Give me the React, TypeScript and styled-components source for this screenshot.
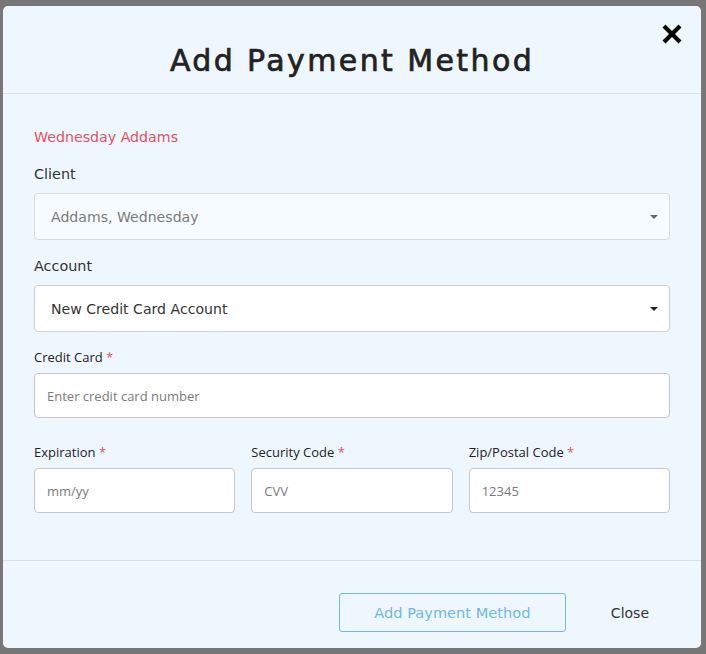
import React from "react";
import styled, { createGlobalStyle } from "styled-components";

const Global = createGlobalStyle`
  html, body { margin: 0; padding: 0; background: #777777; }
  * { box-sizing: border-box; }
`;

const Backdrop = styled.div`
  width: 706px;
  height: 654px;
  background: #777777;
  padding: 6px 5px 6px 3px;
`;

const Modal = styled.div`
  width: 698px;
  height: 642px;
  background: #eff7fe;
  border-radius: 5px;
  display: flex;
  flex-direction: column;
`;

const Header = styled.div`
  position: relative;
  height: 88px;
  border-bottom: 1px solid #dcdfe3;
  display: flex;
  align-items: center;
  justify-content: center;
  padding-top: 22px;
`;

const Title = styled.h1`
  margin: 0;
  font-family: "DejaVu Sans", sans-serif;
  font-weight: 400;
  font-size: 30px;
  letter-spacing: 2.4px;
  -webkit-text-stroke: 0.7px #222222;
  color: #222222;
`;

const CloseX = styled.button`
  position: absolute;
  right: 19px;
  top: 18px;
  width: 20px;
  height: 20px;
  border: none;
  background: transparent;
  padding: 0;
  cursor: pointer;
`;

const Body = styled.div`
  flex: 1;
  padding: 33px 31px 0 31px;
  display: flex;
  flex-direction: column;
`;

const ClientName = styled.div`
  font-family: "DejaVu Sans", sans-serif;
  font-size: 14.2px;
  color: #e4505e;
  line-height: 20px;
  margin-bottom: 17px;
`;

const BigLabel = styled.div`
  font-family: "DejaVu Sans", sans-serif;
  font-size: 14.4px;
  color: #333333;
  line-height: 20px;
  margin-bottom: 9px;
`;

const SelectBox = styled.div<{ $disabled?: boolean; $gap: number }>`
  height: 47px;
  border: 1px solid ${(p) => (p.$disabled ? "#d8dbdf" : "#ccd0d4")};
  border-radius: 4px;
  background: ${(p) => (p.$disabled ? "#f6fbff" : "#ffffff")};
  display: flex;
  align-items: center;
  justify-content: space-between;
  padding: 0 11px 0 16px;
  font-family: "DejaVu Sans", sans-serif;
  font-size: 14.1px;
  color: ${(p) => (p.$disabled ? "#7a7a7a" : "#333333")};
  margin-bottom: ${(p) => p.$gap}px;
`;

const Caret = styled.span<{ $muted?: boolean }>`
  width: 0;
  height: 0;
  border-left: 4px solid transparent;
  border-right: 4px solid transparent;
  border-top: 4px solid ${(p) => (p.$muted ? "#666" : "#222")};
`;

const FieldLabel = styled.div`
  font-family: "Open Sans", sans-serif;
  font-size: 13px;
  color: #222222;
  line-height: 18px;
  margin-bottom: 7px;
`;

const Star = styled.span`
  color: #e4505e;
`;

const Input = styled.input`
  width: 100%;
  height: 45px;
  border: 1px solid #c4c8cd;
  border-radius: 4px;
  background: #ffffff;
  padding: 0 12px;
  font-family: "Open Sans", sans-serif;
  font-size: 13px;
  color: #333;
  outline: none;
  &::placeholder { color: #7a7a7a; }
`;

const Field = styled.div`
  display: flex;
  flex-direction: column;
`;

const Row = styled.div`
  display: grid;
  grid-template-columns: 1fr 1fr 1fr;
  gap: 16px;
  margin-top: 25px;
`;

const Footer = styled.div`
  height: 88px;
  border-top: 1px solid #dcdfe3;
  display: flex;
  align-items: flex-start;
  justify-content: flex-end;
  padding: 32px 52px 0 0;
  gap: 45px;
`;

const PrimaryButton = styled.button`
  width: 227px;
  height: 39px;
  border: 1px solid #70b8e8;
  border-radius: 3px;
  background: transparent;
  color: #6db7e8;
  font-family: "DejaVu Sans", sans-serif;
  font-size: 14.6px;
  cursor: pointer;
`;

const TextButton = styled.button`
  height: 39px;
  border: none;
  background: transparent;
  color: #333333;
  font-family: "DejaVu Sans", sans-serif;
  font-size: 14px;
  padding: 0;
  cursor: pointer;
`;

export default function App() {
  return (
    <>
      <Global />
      <Backdrop>
        <Modal>
          <Header>
            <Title>Add Payment Method</Title>
            <CloseX aria-label="close">
              <svg width="20" height="20" viewBox="0 0 20 20">
                <path d="M3.5 3.5 L16.5 16.5 M16.5 3.5 L3.5 16.5" stroke="#000" strokeWidth="4.2" strokeLinecap="square" />
              </svg>
            </CloseX>
          </Header>
          <Body>
            <ClientName>Wednesday Addams</ClientName>
            <BigLabel>Client</BigLabel>
            <SelectBox $disabled $gap={16}>
              <span>Addams, Wednesday</span>
              <Caret $muted />
            </SelectBox>
            <BigLabel>Account</BigLabel>
            <SelectBox $gap={16}>
              <span>New Credit Card Account</span>
              <Caret />
            </SelectBox>
            <Field>
              <FieldLabel>
                Credit Card <Star>*</Star>
              </FieldLabel>
              <Input placeholder="Enter credit card number" />
            </Field>
            <Row>
              <Field>
                <FieldLabel>
                  Expiration <Star>*</Star>
                </FieldLabel>
                <Input placeholder="mm/yy" />
              </Field>
              <Field>
                <FieldLabel>
                  Security Code <Star>*</Star>
                </FieldLabel>
                <Input placeholder="CVV" />
              </Field>
              <Field>
                <FieldLabel>
                  Zip/Postal Code <Star>*</Star>
                </FieldLabel>
                <Input placeholder="12345" />
              </Field>
            </Row>
          </Body>
          <Footer>
            <PrimaryButton>Add Payment Method</PrimaryButton>
            <TextButton>Close</TextButton>
          </Footer>
        </Modal>
      </Backdrop>
    </>
  );
}
